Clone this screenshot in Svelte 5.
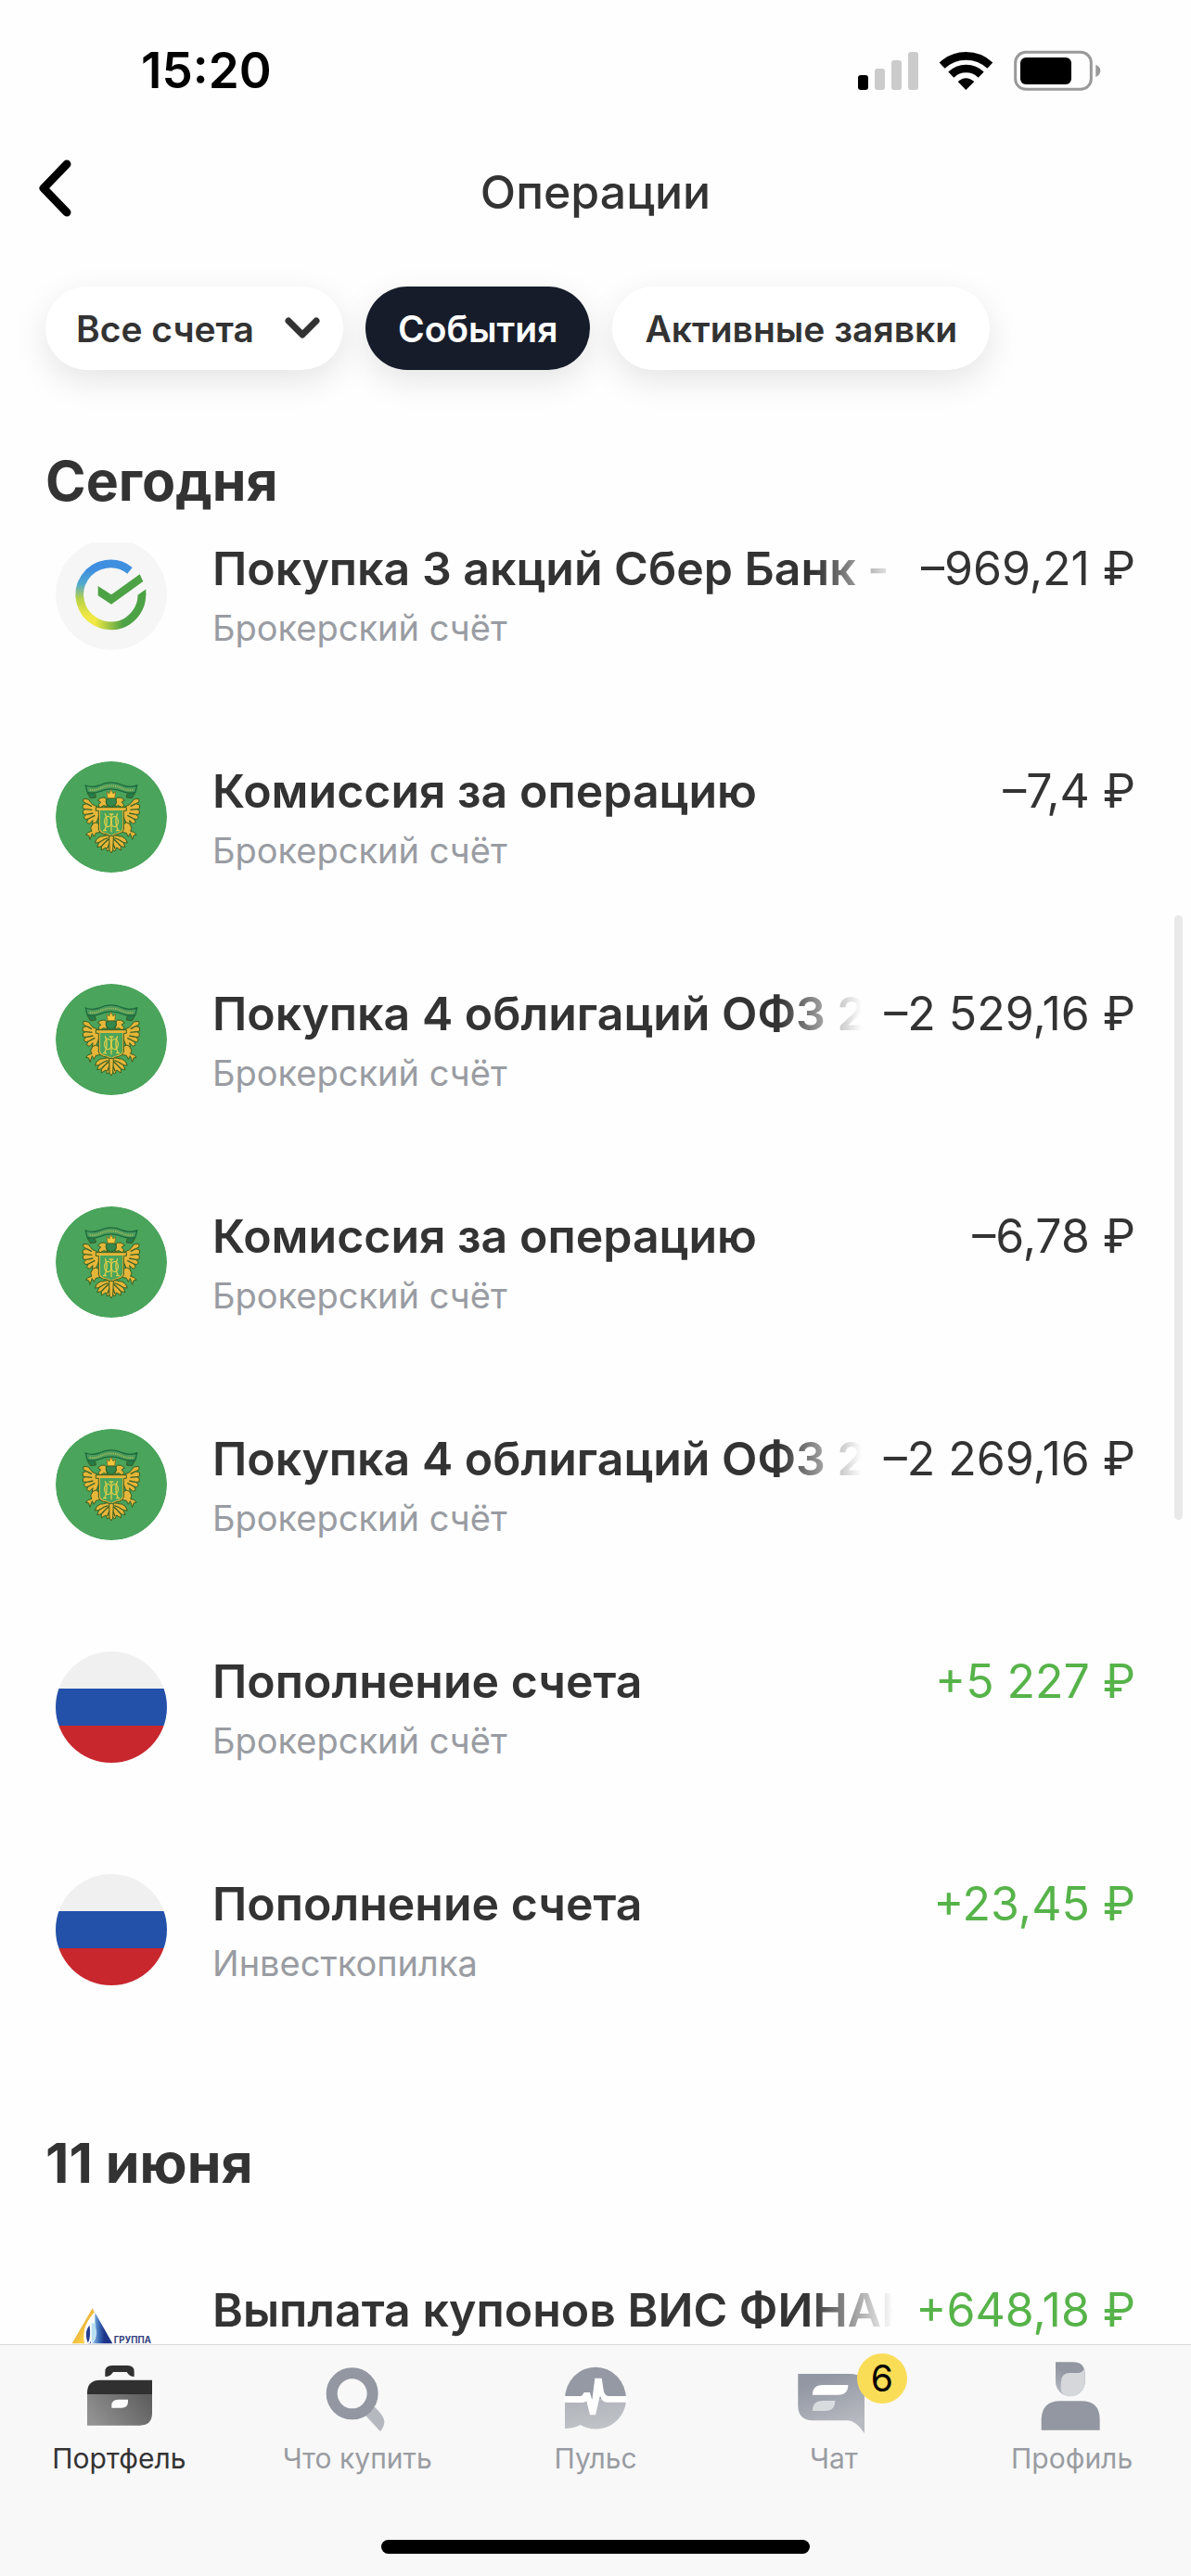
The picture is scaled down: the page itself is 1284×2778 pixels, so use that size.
<script lang="ts">
  type Logo = 'sber' | 'minfin' | 'russia' | 'vis';
  type Operation = { logo: Logo; title: string; account: string; amount: string };

  const days: { name: string; operations: Operation[] }[] = [
    {
      name: 'Сегодня',
      operations: [
        { logo: 'sber', title: 'Покупка 3 акций Сбер Банк -', account: 'Брокерский счёт', amount: '–969,21 ₽' },
        { logo: 'minfin', title: 'Комиссия за операцию', account: 'Брокерский счёт', amount: '–7,4 ₽' },
        { logo: 'minfin', title: 'Покупка 4 облигаций ОФЗ 2', account: 'Брокерский счёт', amount: '–2 529,16 ₽' },
        { logo: 'minfin', title: 'Комиссия за операцию', account: 'Брокерский счёт', amount: '–6,78 ₽' },
        { logo: 'minfin', title: 'Покупка 4 облигаций ОФЗ 2', account: 'Брокерский счёт', amount: '–2 269,16 ₽' },
        { logo: 'russia', title: 'Пополнение счета', account: 'Брокерский счёт', amount: '+5 227 ₽' },
        { logo: 'russia', title: 'Пополнение счета', account: 'Инвесткопилка', amount: '+23,45 ₽' }
      ]
    },
    {
      name: '11 июня',
      operations: [
        { logo: 'vis', title: 'Выплата купонов ВИС ФИНАН', account: 'Брокерский счёт', amount: '+648,18 ₽' }
      ]
    }
  ];

  const tabs = [
    { id: 'portfolio', label: 'Портфель', viewBox: '78 192 252 252', badge: 0 },
    { id: 'search', label: 'Что купить', viewBox: '849 192 252 252', badge: 0 },
    { id: 'pulse', label: 'Пульс', viewBox: '60 72 252 252', badge: 0 },
    { id: 'chat', label: 'Чат', viewBox: '831 72 252 252', badge: 6 },
    { id: 'profile', label: 'Профиль', viewBox: '162 72 252 252', badge: 0 }
  ];

  let activeTab = $state('portfolio');
  let filter = $state('events');
  let account = $state('all');
</script>

{#snippet sber()}
  <svg class="logo" viewBox="60 30 360 360" aria-hidden="true">
    <defs>
      <linearGradient id="sber-left" x1="0" y1="0" x2="0" y2="1">
        <stop offset="0.1" stop-color="#3f8fe0" />
        <stop offset="0.35" stop-color="#52a9cf" />
        <stop offset="0.6" stop-color="#b5d146" />
        <stop offset="0.9" stop-color="#f0e843" />
      </linearGradient>
      <linearGradient id="sber-right" x1="0" y1="0" x2="1" y2="0">
        <stop offset="0" stop-color="#f0e843" />
        <stop offset="0.6" stop-color="#4da245" />
      </linearGradient>
    </defs>
    <circle cx="240" cy="210" r="180" fill="#f6f6f6" />
    <path d="M300 133A100 100 0 1 0 190 299" fill="none" stroke="url(#sber-left)" stroke-width="26" />
    <path d="M188 298A100 100 0 0 0 338 200" fill="none" stroke="url(#sber-right)" stroke-width="26" />
    <path d="M352 193V213H326V213L329 210Z" fill="#4da245" />
    <path d="M300 142 320 118 352 192 326 212Z" fill="#f6f6f6" />
    <path d="M197 183 240 211 332 145 343 168 240 242 197 214Z" fill="#4da245" />
  </svg>
{/snippet}

{#snippet eagleHalf()}
  <g stroke="#3a5f22" stroke-width="3" stroke-linejoin="round">
    <path d="M170 162 163 166 172 181 190 179 188 168Z" fill="#267c4b" />
    <path d="M205 216C196 206 180 206 174 196L166 185 150 183 149 193 160 199 148 203 147 214 157 217 148 222 149 233 160 234 151 242 156 250 166 248 160 259 169 264 180 253 178 266 190 264 198 245Z" fill="#e6b63a" />
    <path d="M160 199 177 208M157 217 178 219M160 234 181 230M166 248 187 237" fill="none" stroke-width="4" />
    <path d="M228 208 215 205 203 212 198 203 206 194 196 188 207 180 219 179 226 188 224 198Z" fill="#e6b63a" />
    <path d="M180 264 190 260 201 266 199 281 207 291 190 294 184 306 178 295 171 315 167 302 158 300 165 292 177 288 173 278Z" fill="#e6b63a" />
    <path d="M239 303C222 298 214 307 205 305L193 313 187 326 200 325 194 340 208 337 208 350 222 341 227 353 239 344Z" fill="#e6b63a" />
    <path d="M229 310C216 313 207 320 200 325M235 310C225 320 214 330 208 337M238 316 227 345" fill="none" stroke-width="4" />
  </g>
{/snippet}

{#snippet minfin()}
  <svg class="logo" viewBox="60 62 360 360" aria-hidden="true">
    <circle cx="240" cy="242" r="180" fill="#4aa45b" />
    {@render eagleHalf()}
    <g transform="matrix(-1 0 0 1 479 0)">{@render eagleHalf()}</g>
    <path d="M157 140Q178 148 201 140Q239 121 278 140Q300 148 323 140L318 162Q300 168 277 160Q239 143 202 160Q180 168 162 162Z" fill="#4a9c5c" stroke="#1c693d" stroke-width="4" />
    <path d="M170 154Q185 158 203 150Q239 133 276 150Q295 158 311 154" fill="none" stroke="#a8b957" stroke-width="5" stroke-dasharray="4 3" />
    <path d="M228 204Q217 192 228 181H251Q262 192 251 204L239 210Z" fill="#34884c" stroke="#2c5a25" stroke-width="3" />
    <path d="M228 181 225 160 233 167 239 153 246 167 254 160 251 181Z" fill="#f4c73c" stroke="#725c1e" stroke-width="2" />
    <path d="M190 211H289V222H280V283Q275 296 255 299L240 306 225 299Q202 296 199 283V222H190Z" fill="#e6b63a" stroke="#3a5f22" stroke-width="3" />
    <path d="M204 221H276V281Q270 292 253 295L240 301 227 295Q207 292 204 281Z" fill="#4aa45b" />
    <g fill="none" stroke="#dfce49" stroke-width="4">
      <path d="M220 231Q232 258 218 286M260 231Q248 258 262 286M213 286H225M255 286H267M240 231V291M233 233H247" />
      <ellipse cx="229" cy="257" rx="11" ry="17" />
      <ellipse cx="251" cy="257" rx="11" ry="17" />
    </g>
    <path d="M233 305Q240 300 247 305L245 350 240 359 234 350Z" fill="#e6b63a" stroke="#3a5f22" stroke-width="3" />
  </svg>
{/snippet}

{#snippet vis()}
  <svg class="logo" viewBox="0 -66 360 360" aria-hidden="true">
    <defs>
      <linearGradient id="vis-gold" x1="0" y1="0" x2="1" y2="1">
        <stop offset="0.3" stop-color="#e5a42d" />
        <stop offset="0.7" stop-color="#fbd04a" />
        <stop offset="1" stop-color="#d59629" />
      </linearGradient>
      <linearGradient id="vis-blue" x1="0" y1="0" x2="1" y2="0">
        <stop offset="0" stop-color="#a6d3ee" />
        <stop offset="0.35" stop-color="#3c6db9" />
        <stop offset="0.6" stop-color="#20358a" />
      </linearGradient>
    </defs>
    <path d="M119 25 126 39C105 65 86 83 93 139H53Z" fill="url(#vis-gold)" />
    <path d="M127 38 184 139H116Q139 122 127 78Z" fill="url(#vis-blue)" />
    <path d="M112 77C93 96 94 125 105 139H114Z" fill="#243f91" />
    <path d="M126 41C98 76 87 105 102 139M112 76C116 100 115 125 107 139" fill="none" stroke="#fff" stroke-width="6" />
    <path d="M116 73H129V111Q128 128 116 136Z" fill="#b8dff2" />
    <text class="vis-name" x="188" y="138">ГРУППА</text>
  </svg>
{/snippet}

<div class="screen">
  <div class="status-bar">
    <span class="time">15:20</span>
    <svg class="indicators" viewBox="75 69 786 132" role="img" aria-label="Связь, Wi-Fi, батарея">
      <rect x="75" y="150" width="33" height="48" rx="9" />
      <g fill="#cbcbcb">
        <rect x="129" y="129" width="33" height="69" rx="9" />
        <rect x="183" y="102" width="33" height="96" rx="9" />
        <rect x="237" y="75" width="33" height="123" rx="9" />
      </g>
      <path d="M347 119A113 113 0 0 1 502 119M376 149A69 69 0 0 1 473 149" fill="none" stroke="#000" stroke-width="26" />
      <path d="M424 198 398 171Q424 148 451 171Z" />
      <rect x="584" y="76" width="245" height="120" rx="34" fill="none" stroke="#999" stroke-width="9" />
      <rect x="600" y="93" width="165" height="87" rx="18" />
      <path d="M844 116Q859 122 859 136T844 156Z" fill="#999" />
    </svg>
  </div>

  <header class="title-bar">
    <button class="back" aria-label="Назад">
      <svg viewBox="0 0 36 62"><path d="M31 5 6 31 31 57" /></svg>
    </button>
    <h1>Операции</h1>
  </header>

  <div class="filters">
    <label class="chip account-chip">
      <select bind:value={account} aria-label="Счёт">
        <option value="all">Все счета</option>
      </select>
      <svg class="chevron" viewBox="0 0 38 24"><path d="M4 4 19 19 34 4" /></svg>
    </label>
    <button class="chip" class:active={filter === 'events'} onclick={() => (filter = 'events')}>События</button>
    <button class="chip" class:active={filter === 'orders'} onclick={() => (filter = 'orders')}>Активные заявки</button>
  </div>

  <main>
    {#each days as day}
      <section>
        <h2>{day.name}</h2>
        <ul>
          {#each day.operations as op}
            <li>
              {#if op.logo === 'sber'}
                {@render sber()}
              {:else if op.logo === 'minfin'}
                {@render minfin()}
              {:else if op.logo === 'vis'}
                {@render vis()}
              {:else}
                <div class="logo flag"></div>
              {/if}
              <div class="info">
                <div class="line">
                  <span class="name">{op.title}</span>
                  <span class="amount" class:income={op.amount.startsWith('+')}>{op.amount}</span>
                </div>
                <div class="account">{op.account}</div>
              </div>
            </li>
          {/each}
        </ul>
      </section>
    {/each}
  </main>
  <div class="scroll-thumb"></div>

  <footer>
    <nav>
      {#each tabs as tab}
        <button class="tab" class:active={activeTab === tab.id} onclick={() => (activeTab = tab.id)}>
          <span class="icon">
            <svg viewBox={tab.viewBox} aria-hidden="true">
              {#if tab.id === 'portfolio'}
                <defs>
                  <linearGradient id="case" x1="0" y1="0.7" x2="1" y2="0.3">
                    <stop offset="0" stop-color="#929292" />
                    <stop offset="1" stop-color="#606060" />
                  </linearGradient>
                </defs>
                <path d="M160 249V233Q160 213 182 213H233Q254 213 254 233V249Q238 249 230 234H186Q178 249 160 249Z" fill="#303030" />
                <path d="M102 306V301Q102 260 145 260H312V306Z" fill="#303030" />
                <path d="M102 306H312V367Q312 407 272 407H102Z" fill="url(#case)" />
                <path d="M181 350V343Q181 323 202 323H234V330Q234 350 213 350Z" fill="#fff" />
              {:else if tab.id === 'search'}
                <path d="M1003 376 1050 426Q1063 412 1063 394 1062 375 1032 347Z" fill="#b5b8bf" />
                <circle cx="959" cy="304" r="66" fill="none" stroke="#9297a2" stroke-width="36" />
              {:else if tab.id === 'pulse'}
                <defs>
                  <linearGradient id="pulse-low" x1="0" y1="0" x2="0.3" y2="1">
                    <stop offset="0" stop-color="#afb2b8" />
                    <stop offset="1" stop-color="#bfc2c7" />
                  </linearGradient>
                </defs>
                <path d="M87 202A99 104 0 0 1 285 202Z" fill="#9499a3" />
                <path d="M87 202H285A98 98 0 0 1 137 285Q115 297 87 297Z" fill="url(#pulse-low)" />
                <path d="M84 192H138Q145 190 149 180H168L175 205 184 134H206L213 178Q217 192 230 192H288V212H222Q205 211 201 190L186 253H168L157 208Q153 213 143 213H84Z" fill="#fff" />
              {:else if tab.id === 'chat'}
                <defs>
                  <linearGradient id="bubble" x1="0" y1="0" x2="0.4" y2="1">
                    <stop offset="0.2" stop-color="#9297a3" />
                    <stop offset="1" stop-color="#b7bac0" />
                  </linearGradient>
                </defs>
                <path d="M841 120H1010Q1056 120 1056 166V312Q1026 271 1002 271H890Q841 271 841 223Z" fill="url(#bubble)" />
                <path d="M888 188Q888 156 921 156H1003Q1003 188 970 188Z" fill="#fff" />
                <path d="M888 240Q888 207 921 207H961Q961 240 928 240Z" fill="#d9dcdf" />
              {:else}
                <defs>
                  <linearGradient id="hair" x1="0" y1="1" x2="0.5" y2="0">
                    <stop offset="0" stop-color="#b9bcc3" />
                    <stop offset="0.7" stop-color="#9297a1" />
                  </linearGradient>
                </defs>
                <path d="M234 82H290Q329 82 329 122V145A47 47 0 0 1 234 145Z" fill="url(#hair)" />
                <path d="M327 104Q329 110 329 145A47 47 0 0 1 260 187C246 173 252 155 252 143Q254 117 280 117H306Q320 116 327 104Z" fill="#d5d7db" />
                <path d="M188 302V267Q190 208 249 208H317Q377 208 377 267V302Z" fill="#9297a1" />
              {/if}
            </svg>
            {#if tab.badge}
              <span class="badge">{tab.badge}</span>
            {/if}
          </span>
          {tab.label}
        </button>
      {/each}
    </nav>
    <div class="home-indicator"></div>
  </footer>
</div>

<style>
  :global(body) {
    margin: 0;
    background: #fefefe;
  }
  .screen {
    position: relative;
    display: flex;
    flex-direction: column;
    height: 100vh;
    overflow: hidden;
    font-family: Inter, 'Liberation Sans', sans-serif;
    color: #333;
  }
  button, select {
    font: inherit;
    color: inherit;
    background: none;
    border: none;
    padding: 0;
    cursor: pointer;
  }

  .status-bar {
    display: flex;
    align-items: center;
    justify-content: space-between;
    box-sizing: border-box;
    height: 140px;
    padding: 12px 97px 0 152px;
  }
  .time {
    font-size: 53px;
    font-weight: 600;
    color: #000;
  }
  .indicators {
    width: 262px;
    height: 44px;
  }

  .title-bar {
    display: grid;
    grid-template-columns: 120px 1fr 120px;
    align-items: center;
    height: 133px;
  }
  .back {
    display: flex;
    padding: 0 0 8px 41px;
  }
  .back svg {
    width: 36px;
    height: 62px;
  }
  .back path, .chevron path {
    fill: none;
    stroke: #000;
    stroke-width: 9;
    stroke-linecap: round;
    stroke-linejoin: round;
  }
  h1 {
    margin: 0;
    font-size: 50px;
    font-weight: 500;
    text-align: center;
  }

  .filters {
    display: flex;
    gap: 24px;
    padding: 36px 49px 0;
  }
  .chip {
    display: flex;
    align-items: center;
    gap: 33px;
    height: 90px;
    padding: 0 35px;
    border-radius: 45px;
    background: #fff;
    box-shadow: 0 12px 36px rgba(0, 0, 0, 0.1);
    font-size: 39px;
    font-weight: 600;
    white-space: nowrap;
  }
  .account-chip { padding: 0 25px 0 33px; }
  .chip.active {
    background: #161c29;
    color: #fff;
  }
  .chip select {
    appearance: none;
    outline: none;
  }
  .chevron {
    width: 38px;
    height: 24px;
  }
  .chevron path {
    stroke: #333;
    stroke-width: 7;
  }

  main {
    flex: 1;
    min-height: 0;
    overflow: hidden;
  }
  h2 {
    margin: 0;
    padding: 102px 49px 36px;
    font-size: 59px;
    font-weight: 700;
    line-height: 60px;
  }
  section:first-child h2 { padding-top: 90px; }
  ul {
    margin: 0;
    padding: 0;
    list-style: none;
    overflow: hidden;
  }
  li {
    display: flex;
    gap: 49px;
    height: 120px;
    padding: 60px;
  }
  /* the first row is scrolled partly under the day heading */
  section:first-child li:first-child { margin-top: -64px; }
  .logo {
    flex: none;
    width: 120px;
    height: 120px;
    border-radius: 50%;
  }
  .flag { background: linear-gradient(#f0f0f0 33%, #2350a9 33% 67%, #c8272e 67%); }
  .vis-name {
    font-size: 29px;
    font-weight: 700;
    fill: #343f80;
  }
  .info {
    flex: 1;
    min-width: 0;
  }
  .line {
    display: flex;
    justify-content: space-between;
    gap: 24px;
    font-size: 50px;
    line-height: 64px;
    white-space: nowrap;
  }
  .name {
    flex: 1;
    overflow: hidden;
    font-weight: 600;
    mask-image: linear-gradient(to left, transparent, #000 90px);
  }
  .income { color: #56b349; }
  .account {
    margin-top: 8px;
    font-size: 38px;
    line-height: 48px;
    color: #999ca2;
  }
  .scroll-thumb {
    position: absolute;
    top: 987px;
    right: 9px;
    width: 9px;
    height: 652px;
    border-radius: 5px;
    background: #e9e9e9;
  }

  footer {
    box-sizing: border-box;
    height: 250px;
    padding: 15px 0 24px;
    border-top: 1px solid #d8d8d9;
    background: #f8f8f8;
    display: flex;
    flex-direction: column;
    justify-content: space-between;
    align-items: center;
  }
  nav {
    display: flex;
    width: 100%;
  }
  .tab {
    flex: 1 1 0;
    display: flex;
    flex-direction: column;
    align-items: center;
    gap: 5px;
    font-size: 30px;
    line-height: 36px;
    color: #999ca2;
  }
  .tab.active { color: #333; }
  .icon {
    position: relative;
    display: flex;
  }
  .icon svg {
    width: 84px;
    height: 84px;
  }
  .badge {
    position: absolute;
    top: -6px;
    left: 67px;
    width: 54px;
    height: 54px;
    border-radius: 50%;
    background: #fadd57;
    color: #000;
    font-size: 39px;
    line-height: 54px;
    text-align: center;
  }
  .home-indicator {
    width: 36%;
    height: 15px;
    border-radius: 8px;
    background: #000;
  }
</style>
